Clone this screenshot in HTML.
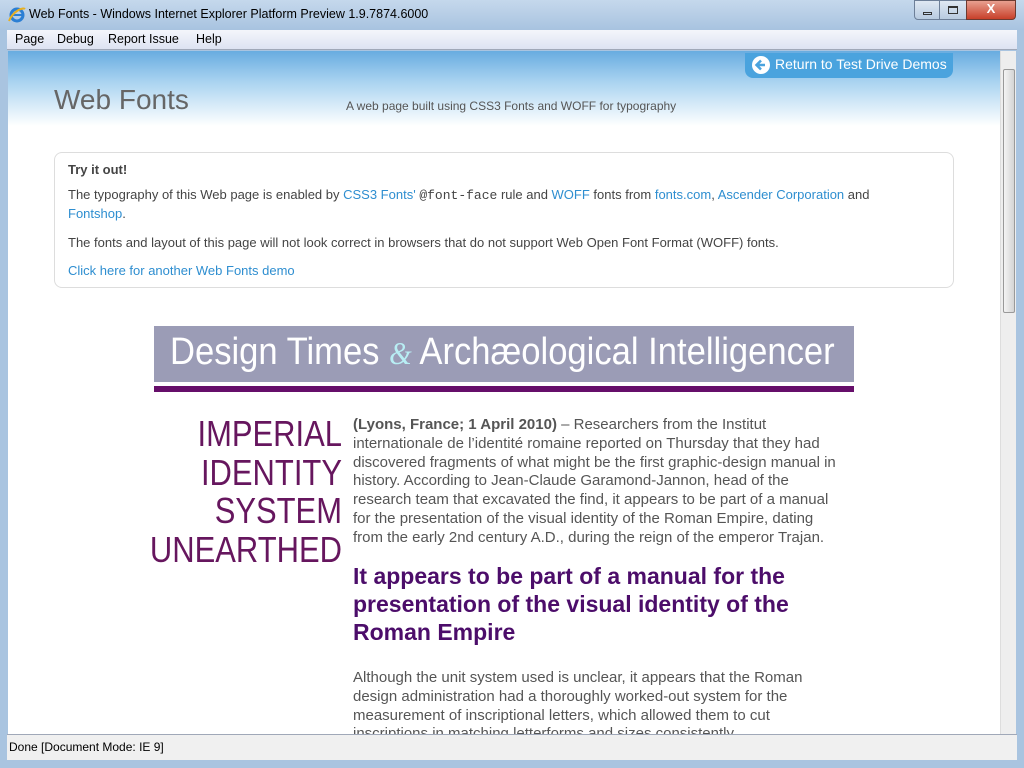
<!DOCTYPE html>
<html><head><meta charset="utf-8"><style>
*{margin:0;padding:0;box-sizing:border-box}
body{width:1024px;height:768px;overflow:hidden;font-family:"Liberation Sans",sans-serif;background:#a9c4e0;position:relative}
.title{position:absolute;left:0;top:0;width:1024px;height:30px;background:linear-gradient(#c5d8ec,#a8c3e0);}
.title span{position:absolute;left:29px;top:7px;font-size:12.5px;color:#000}
.menu{position:absolute;left:7px;top:30px;width:1010px;height:20px;background:linear-gradient(#f4f6fb,#dde3f2);border-bottom:1px solid #a0a8b8;font-size:12.5px}
.menu span{position:absolute;top:2px}
.content{position:absolute;left:8px;top:51px;width:992px;height:683px;background:linear-gradient(#68ace0 0px,#a8d2f0 30px,#ffffff 75px,#fff);overflow:hidden}
.sb{position:absolute;left:1000px;top:51px;width:16px;height:683px;background:#eee;border-left:1px solid #ddd}
.status{position:absolute;left:7px;top:734px;width:1010px;height:26px;background:#f0f0f0;border-top:1px solid #a0a8b8;font-size:12px;padding:5px 2px}
.c{position:absolute}
a{color:#2e8ed0;text-decoration:none}
.p{font-size:15px;line-height:18.8px;color:#555}
.btn{position:absolute;top:0;height:20px;background:linear-gradient(#dfe8f3,#b8cbe0);border:1px solid #6d7f98}
</style></head><body>
<div class="title"><svg style="position:absolute;left:8px;top:6px" width="18" height="18"><circle cx="9" cy="9" r="6" fill="none" stroke="#2b7fd4" stroke-width="3"/><path d="M4 9h10" stroke="#2b7fd4" stroke-width="2"/><path d="M1 15C5 5 15 1 17 3" stroke="#e8b020" stroke-width="2" fill="none"/></svg><span>Web Fonts - Windows Internet Explorer Platform Preview 1.9.7874.6000</span>
<div class="btn" style="left:914px;width:26px;border-radius:0 0 0 4px"><div style="position:absolute;left:8px;top:11px;width:9px;height:3px;border:1px solid #333"></div></div>
<div class="btn" style="left:939px;width:28px"><div style="position:absolute;left:8px;top:5px;width:10px;height:8px;border:1px solid #333;border-top-width:2px"></div></div>
<div class="btn" style="left:966px;width:50px;background:linear-gradient(#e8a090,#c8402a);border-color:#6d3a30;border-radius:0 0 4px 0;color:#fff;font-weight:bold;text-align:center;font-size:13px">X</div>
</div>
<div class="menu"><span style="left:8px">Page</span><span style="left:50px">Debug</span><span style="left:101px">Report Issue</span><span style="left:189px">Help</span></div>
<div class="content">
<div class="c" style="left:737px;top:2px;width:208px;height:25px;background:#4aa3de;border-radius:0 0 8px 8px;color:#fff;font-size:14px;padding:3px 0 0 30px">Return to Test Drive Demos
<svg style="position:absolute;left:6px;top:2px" width="20" height="20"><circle cx="10" cy="10" r="9" fill="#fff"/><path d="M14 10H6M10 5.5L5.5 10 10 14.5" stroke="#4aa3de" stroke-width="2.5" fill="none"/></svg></div>
<div class="c" style="left:46px;top:33px;font-size:28px;color:#666">Web Fonts</div>
<div class="c" style="left:338px;top:48px;font-size:12px;color:#555">A web page built using CSS3 Fonts and WOFF for typography</div>
<div class="c" style="left:46px;top:101px;width:900px;height:136px;border:1px solid #ddd;border-radius:8px;background:#fff;font-size:13px;color:#444;padding:8px 13px;line-height:18px">
<b>Try it out!</b>
<div style="margin-top:7px;width:830px">The typography of this Web page is enabled by <a>CSS3 Fonts'</a> <span style="font-family:'Liberation Mono',monospace">@font-face</span> rule and <a>WOFF</a> fonts from <a>fonts.com</a>, <a>Ascender Corporation</a> and <a>Fontshop</a>.</div>
<div style="margin-top:11px">The fonts and layout of this page will not look correct in browsers that do not support Web Open Font Format (WOFF) fonts.</div>
<div style="margin-top:10px"><a>Click here for another Web Fonts demo</a></div></div>
<div class="c" style="left:146px;top:275px;width:700px;height:56px;background:#9b9cb6;overflow:hidden"><div style="position:absolute;left:16px;top:5px;color:#fff;font-size:38px;white-space:nowrap;transform:scaleX(0.91);transform-origin:left top">Design Times <i style="color:#b8eef4;font-family:'Liberation Serif',serif;font-size:32px">&amp;</i> Archæological Intelligencer</div></div>
<div class="c" style="left:146px;top:335px;width:700px;height:6px;background:#660e6a"></div>
<div class="c" style="left:100px;top:364px;width:234px;text-align:right;color:#66165e;font-size:36px;line-height:38.5px;transform:scaleX(0.86);transform-origin:right top">IMPERIAL<br>IDENTITY<br>SYSTEM<br>UNEARTHED</div>
<div class="c p" style="left:345px;top:365px;width:492px"><b>(Lyons, France; 1 April 2010)</b> – Researchers from the Institut internationale de l’identité romaine reported on Thursday that they had discovered fragments of what might be the first graphic-design manual in history. According to Jean-Claude Garamond-Jannon, head of the research team that excavated the find, it appears to be part of a manual for the presentation of the visual identity of the Roman Empire, dating from the early 2nd century A.D., during the reign of the emperor Trajan.</div>
<div class="c" style="left:345px;top:511px;width:460px;color:#4c0d6a;font-size:23px;line-height:28px;font-weight:bold">It appears to be part of a manual for the presentation of the visual identity of the Roman Empire</div>
<div class="c p" style="left:345px;top:618px;width:480px">Although the unit system used is unclear, it appears that the Roman design administration had a thoroughly worked-out system for the measurement of inscriptional letters, which allowed them to cut inscriptions in matching letterforms and sizes consistently</div>
</div>
<div class="sb"><div style="position:absolute;left:2px;top:18px;width:12px;height:244px;background:linear-gradient(90deg,#f4f4f4,#d4d4d4);border:1px solid #999;border-radius:2px"></div></div>
<div class="status">Done [Document Mode: IE 9]</div>
</body></html>
